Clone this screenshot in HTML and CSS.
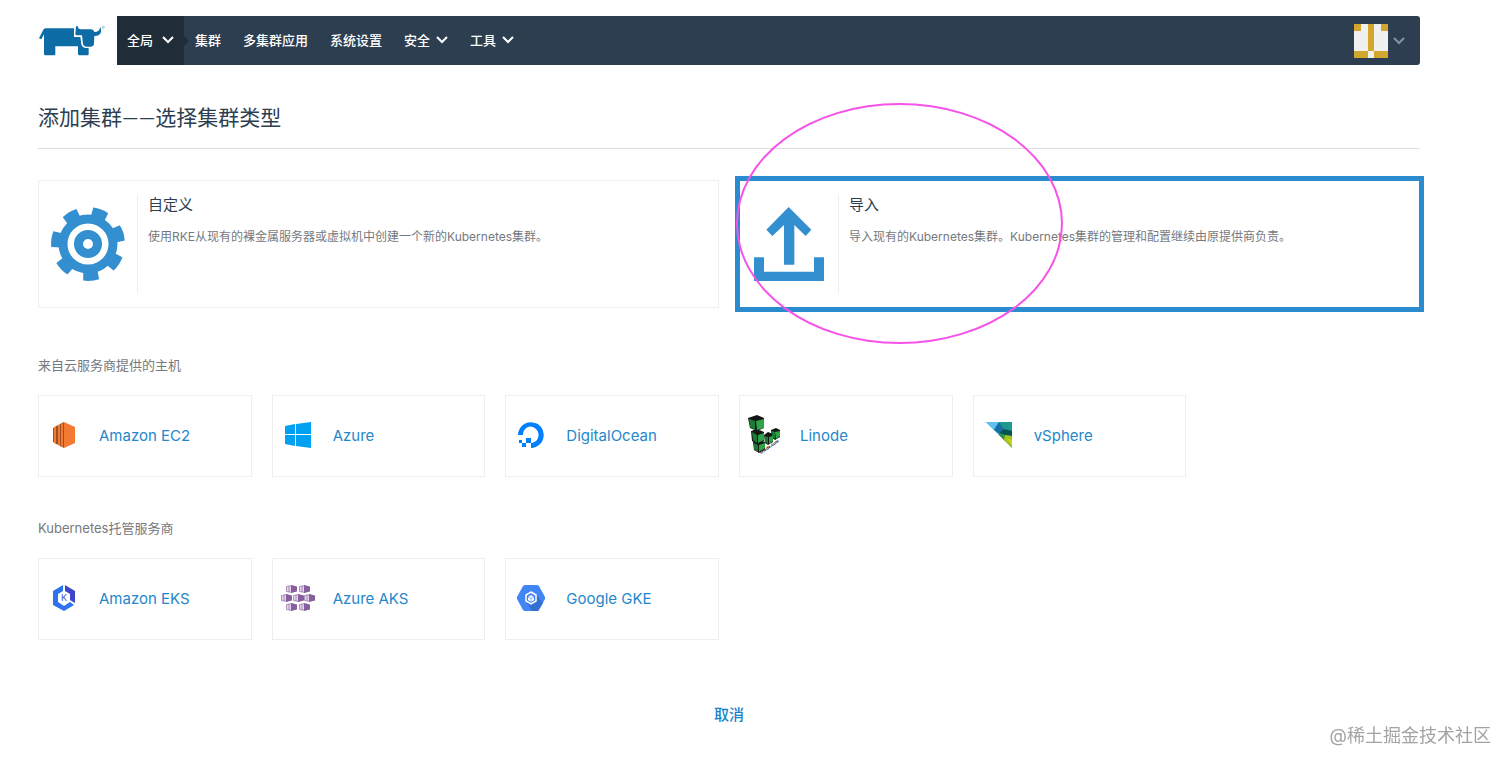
FILE: index.html
```html
<!DOCTYPE html>
<html lang="zh-CN">
<head>
  <meta charset="UTF-8">
  <meta name="viewport" content="width=device-width, initial-scale=1.0">
  <title>添加集群</title>
  <link rel="stylesheet" href="styles.css">
</head>
<body>

<header class="header">
  <a class="logo" href="#" aria-label="Rancher">
    <svg width="68" height="32" viewBox="24 44 204 96">
      <path fill="#0d6ca5" d="M27 84 L40 58 Q42 54 48 54 L132 54 L132 80 L151 80 L154 102 Q157 113 168 113 L176 113 L176 131 Q176 135 172 135 L148 135 Q144 135 144 131 L144 108 L76 108 L76 131 Q76 135 72 135 L46 135 Q42 135 42 131 L42 72 L34 87 Z"/>
      <path fill="#0d6ca5" d="M138 48 L143 47 Q144 57 153 57 L184 57 Q191 57 193 65 Q209 65 211 49 Q220 76 193 77 L192 99 Q192 109 183 109 L171 109 Q161 109 159 101 L156 75 L140 75 Q136 75 136 71 Z"/>
      <circle cx="220" cy="51" r="3" fill="none" stroke="#6b9fc0" stroke-width="2"/>
    </svg>
  </a>
  <nav class="nav">
    <button class="nav-item active">全局
      <svg class="chevron" width="12" height="8" viewBox="0 0 12 8"><path d="M1 1l5 5 5-5"/></svg>
    </button>
    <a class="nav-item" href="#">集群</a>
    <a class="nav-item" href="#">多集群应用</a>
    <a class="nav-item" href="#">系统设置</a>
    <button class="nav-item">安全
      <svg class="chevron" width="12" height="8" viewBox="0 0 12 8"><path d="M1 1l5 5 5-5"/></svg>
    </button>
    <button class="nav-item">工具
      <svg class="chevron" width="12" height="8" viewBox="0 0 12 8"><path d="M1 1l5 5 5-5"/></svg>
    </button>
    <button class="user" aria-label="用户">
      <svg width="34" height="34" viewBox="0 0 5 5" shape-rendering="crispEdges">
        <rect width="5" height="5" fill="#f0f0f0"/>
        <path fill="#d2a72c" d="M0 0h1v1H0zM2 0h1v4H2zM4 0h1v1H4zM0 4h2v1H0zM3 4h2v1H3z"/>
      </svg>
      <svg class="chevron" width="12" height="8" viewBox="0 0 12 8"><path d="M1 1l5 5 5-5"/></svg>
    </button>
  </nav>
</header>

<main>
  <h1>添加集群——选择集群类型</h1>

  <div class="types">
    <button class="type">
      <span class="type-icon">
        <svg width="76" height="76" viewBox="-38 -38 76 76" fill="#338fcf">
          <defs><path id="tooth" d="M26 -7 L36 -8 Q38 0 36 8 L26 7 Z"/></defs>
          <circle r="25" fill="none" stroke="#338fcf" stroke-width="9"/>
          <g transform="rotate(85)">
            <use href="#tooth"/>
            <use href="#tooth" transform="rotate(51.43)"/>
            <use href="#tooth" transform="rotate(102.86)"/>
            <use href="#tooth" transform="rotate(154.29)"/>
            <use href="#tooth" transform="rotate(205.71)"/>
            <use href="#tooth" transform="rotate(257.14)"/>
            <use href="#tooth" transform="rotate(308.57)"/>
          </g>
          <circle r="9.5" fill="none" stroke="#338fcf" stroke-width="9"/>
        </svg>
      </span>
      <span class="type-text">
        <strong>自定义</strong>
        <span>使用RKE从现有的裸金属服务器或虚拟机中创建一个新的Kubernetes集群。</span>
      </span>
    </button>
    <button class="type selected">
      <span class="type-icon">
        <svg width="70" height="74" viewBox="90 126 210 222" fill="#338fcf">
          <path d="M194 126L262 194 245 213 211 180V299H180V180L145 213 127 194ZM90 277H120V320H270V277H300V348H90Z"/>
        </svg>
      </span>
      <span class="type-text">
        <strong>导入</strong>
        <span>导入现有的Kubernetes集群。Kubernetes集群的管理和配置继续由原提供商负责。</span>
      </span>
      <span class="circle"></span>
    </button>
  </div>

  <section>
    <h2>来自云服务商提供的主机</h2>
    <div class="providers">
      <a class="provider" href="#">
        <span class="provider-icon">
          <svg width="22" height="26" viewBox="0 0 22 26">
            <path fill="#f27a33" d="M11 0l11 5v16l-11 5z"/>
            <path fill="#9d5025" d="M0 6l2-1v16l-2-1zM3 4l3-1v20l-3-1zM7 2l4-2v26l-4-2z"/>
            <path fill="#f27a33" d="M1 5l2-1v18l-2-1zM5 3l2-1v22l-2-1zM8 2l2-1v24l-2-1z"/>
          </svg>
        </span>Amazon EC2</a>
      <a class="provider" href="#">
        <span class="provider-icon">
          <svg width="26" height="26" viewBox="0 0 26 26" fill="#00a1f1">
            <path d="M0 4l10-2v10H0zM11 2l15-2v12H11zM0 13h10v11L0 22zM11 13h15v13l-15-2z"/>
          </svg>
        </span>Azure</a>
      <a class="provider" href="#">
        <span class="provider-icon">
          <svg width="26" height="26" viewBox="0 0 26 26" fill="#0080ff">
            <path d="M13 26v-5c5 0 9-5 7-11a8 8 0 0 0-5-5C10 3 5 7 5 13H0C0 5 8-2 17 1c4 1 7 4 8 8 3 9-4 17-12 17z"/>
            <path d="M8 16h5v5H8zM4 21h4v4H4zM1 18h3v3H1z"/>
          </svg>
        </span>DigitalOcean</a>
      <a class="provider" href="#">
        <span class="provider-icon">
          <svg class="linode-logo" width="34" height="40" viewBox="0 0 34 40">
            <path fill="#161616" d="M0 3l9-3 7 3v10l-7 3-7-3zM3 16l6-2 7 3v9l-7 3-5-3zM5 27l5-2 7 2v7l-6 4-5-3zM16 20l4-3 5 2v8l-5 3-3-2zM23 15l5-2 4 2v7l-5 3-3-2z"/>
            <path fill="#1d7a34" d="M1 4l6 2v9l-5-3zM4 17l5 3v8l-4-3zM6 28l4 2v7l-4-3zM17 21l3 1v7l-3-2zM24 16l3 1v7l-3-2z"/>
            <path fill="#2ea348" d="M8 6l8-2v9l-7 2zM10 20l6-2v7l-6 3zM11 30l6-2v5l-6 4zM21 22l4-1v5l-4 3zM27 17l5-1v5l-4 3z"/>
            <text class="linode-label" x="13" y="39" transform="rotate(-34 13 39)">linode.com</text>
          </svg>
        </span>Linode</a>
      <a class="provider" href="#">
        <span class="provider-icon">
          <svg width="26" height="26" viewBox="0 0 26 26">
            <path fill="#2293d2" d="M0 0h26v26z"/>
            <path fill="#62bdf0" d="M0 0h13L8 8z"/>
            <path fill="#166fa0" d="M13 0l5 7-5 4-5-3z"/>
            <path fill="#22988c" d="M13 0h13v9l-8-2z"/>
            <path fill="#075352" d="M18 7l8 2v5l-7-1-6-2z"/>
            <path fill="#378b44" d="M13 11l6 2v6l-6-6z"/>
            <path fill="#a5c618" d="M19 13l7 1v12l-8-8z"/>
            <path fill="#d6d91b" d="M21 16l5 3v4z"/>
          </svg>
        </span>vSphere</a>
    </div>
  </section>

  <section>
    <h2>Kubernetes托管服务商</h2>
    <div class="providers">
      <a class="provider" href="#">
        <span class="provider-icon">
          <svg width="22" height="26" viewBox="0 0 22 26">
            <path fill="#2d73ef" d="M10 0v6l-5 3v8l6 4 6-4 4 3-10 6-11-6V6z"/>
            <path fill="#3c45cb" d="M12 0l10 6v12l-5-3V9l-5-3z"/>
            <text class="eks-label" x="11" y="16">K</text>
          </svg>
        </span>Amazon EKS</a>
      <a class="provider" href="#">
        <span class="provider-icon">
          <svg width="34" height="26" viewBox="0 0 34 26">
            <defs>
              <g id="cube">
                <path fill="#e6d6ec" stroke="#9b78b0" stroke-width=".8" d="M.5 1.500L6 .5v7l-5.500-1z"/>
                <path fill="#875f9e" d="M5 0l6 1.500v5L5 8z"/>
                <path stroke="#9b78b0" stroke-width=".8" d="M3 1v6"/>
              </g>
            </defs>
            <use href="#cube" x="5" y="0"/>
            <use href="#cube" x="18" y="0"/>
            <use href="#cube" x="0" y="9"/>
            <use href="#cube" x="12" y="9"/>
            <use href="#cube" x="23" y="9"/>
            <use href="#cube" x="5" y="18"/>
            <use href="#cube" x="18" y="18"/>
          </svg>
        </span>Azure AKS</a>
      <a class="provider" href="#">
        <span class="provider-icon">
          <svg width="28" height="26" viewBox="0 0 28 26">
            <path fill="#4285f4" d="M8 0h12q1 0 2 1l6 11v2l-6 11q-1 1-2 1H8q-1 0-2-1L0 14v-2L6 1q1-1 2-1z"/>
            <path fill="#3470d2" d="M19 10l7 8-5 8h-6l-5-8z"/>
            <path fill="#4285f4" stroke="#fff" stroke-width="1.5" d="M14 7l5 3v6l-5 3-5-3v-6z"/>
            <path fill="#fff" d="M14 10l3 2v3l-3 2-3-2v-3z"/>
            <path fill="none" stroke="#4285f4" stroke-width=".6" d="M11 12l3 1.500 3-1.500M14 13.500V17"/>
          </svg>
        </span>Google GKE</a>
    </div>
  </section>

  <div class="footer">
    <button class="cancel">取消</button>
  </div>
</main>

<div class="watermark">@稀土掘金技术社区</div>

</body>
</html>
```
FILE: styles.css
```css
* {
  box-sizing: border-box;
}
body {
  margin: 0;
  padding: 16px 92px 0 38px;
  background: #fff;
  color: #2c3e50;
  font-family: Inter, "Noto Sans CJK SC", sans-serif;
  font-size: 13px;
}
button {
  font: inherit;
  color: inherit;
  background: none;
  border: 0;
  padding: 0;
  cursor: pointer;
}
a {
  text-decoration: none;
}
svg {
  display: block;
  flex: none;
}

/* header */
.header {
  display: flex;
  align-items: center;
}
.logo {
  width: 79px;
}
.nav {
  flex: 1;
  display: flex;
  height: 49px;
  background: #2c3e50;
  border-radius: 0 3px 3px 0;
}
.nav-item {
  display: flex;
  align-items: center;
  gap: 6px;
  padding: 0 11px 2px;
  color: #fff;
  font-weight: 500;
}
.nav-item.active {
  position: relative;
  gap: 9px;
  padding: 0 10px 2px;
  background: #202c38;
}
.nav-item.active::after {
  content: "";
  position: absolute;
  left: 100%;
  top: 20px;
  border: 5px solid transparent;
  border-left-color: #202c38;
  border-right: 0;
}
.chevron {
  fill: none;
  stroke: currentColor;
  stroke-width: 2;
}
.user {
  display: flex;
  align-items: center;
  gap: 5px;
  margin-left: auto;
  padding-right: 15px;
  color: #8494a4;
}

h1 {
  margin: 34px 0 31px;
  padding-bottom: 13px;
  border-bottom: 1px solid #dcdee7;
  font-family: Lato, "Noto Sans CJK SC", sans-serif;
  font-size: 21px;
  font-weight: 400;
  line-height: 36px;
}
h2 {
  margin: 0 0 20px;
  color: #76797e;
  font-size: 13px;
  font-weight: 400;
  line-height: 20px;
}
section {
  margin-bottom: 41px;
}

/* cluster types */
.types {
  display: grid;
  grid-template-columns: 1fr 1fr;
  gap: 20px;
  margin-bottom: 47px;
}
.type {
  position: relative;
  display: flex;
  height: 128px;
  padding: 14px 0;
  border: 1px solid #eceef0;
  text-align: left;
}
.type.selected {
  border-color: #2a8bcf;
  box-shadow: 0 0 0 4px #2a8bcf;
}
.type-icon {
  flex: none;
  display: flex;
  align-items: center;
  justify-content: center;
  width: 99px;
  height: 98px;
  border-right: 1px solid #eceef0;
}
.type-text {
  padding-left: 10px;
  color: #76797e;
  font-size: 12px;
  line-height: 20px;
}
.type-text strong {
  display: block;
  margin-bottom: 12px;
  color: #2c3e50;
  font-size: 15px;
  font-weight: 400;
}
.circle {
  position: absolute;
  left: -4px;
  top: -78px;
  width: 327px;
  height: 241px;
  border: 2px solid #f653e8;
  border-radius: 50%;
  z-index: 1;
  pointer-events: none;
}

/* providers */
.providers {
  display: grid;
  grid-template-columns: repeat(6, 1fr);
  gap: 20px;
}
.provider {
  display: flex;
  align-items: center;
  height: 82px;
  padding-bottom: 2px;
  border: 1px solid #eceef0;
  color: #2587cb;
  font-size: 15px;
}
.provider-icon {
  display: flex;
  justify-content: center;
  width: 50px;
  margin-right: 10px;
}
.linode-logo {
  overflow: visible;
}
.linode-label {
  font-size: 4px;
  font-weight: 700;
}
.eks-label {
  font-size: 9px;
  text-anchor: middle;
  fill: #3c55d6;
}

.footer {
  padding: 22px 0 30px;
  text-align: center;
}
.cancel {
  color: #1a82c8;
  font-size: 15px;
  font-weight: 500;
  line-height: 24px;
}
.watermark {
  position: fixed;
  right: 21px;
  bottom: 17px;
  color: #a3a3a3;
  font-size: 18px;
  line-height: 28px;
}
```
